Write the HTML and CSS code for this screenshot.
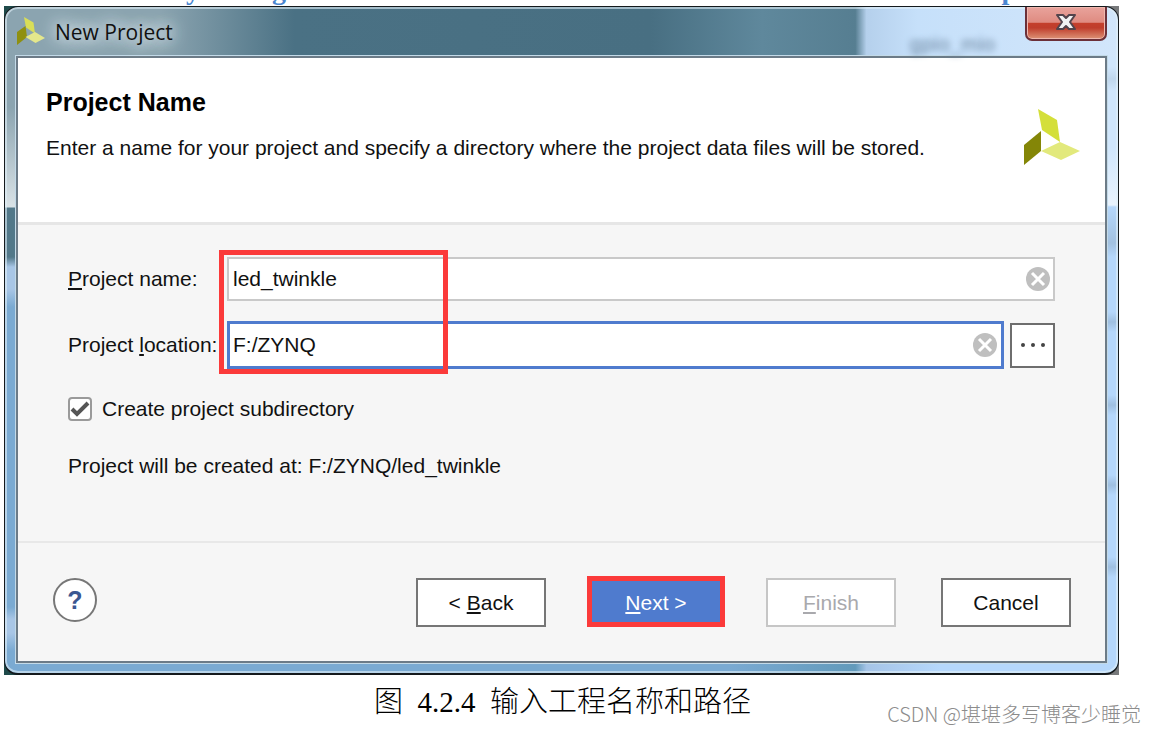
FILE: index.html
```
<!DOCTYPE html>
<html lang="zh-CN">

<head>
    <meta charset="UTF-8">
    <meta name="viewport" content="width=device-width, initial-scale=1.0">
    <title>New Project</title>
    <link rel="stylesheet" href="styles.css">
</head>

<body>
    <p class="previous-line"><span>y</span><span>g</span><span>p</span></p>

    <div class="backdrop">
        <div class="window">
            <header class="titlebar">
                <svg class="titlebar-logo" viewBox="0 0 56 56" aria-hidden="true">
                    <path fill="#d9de58" d="M14 0 33 11 36 33 18 21z" />
                    <path fill="#8f9010" d="M0 30 17 18 20 40 0 56z" />
                    <path fill="#e4e78c" d="M17 40 36 30 56 42 37 52z" />
                </svg>
                <span class="titlebar-text">New Project</span>
                <span class="ghost">gpio_mio</span>
                <button class="close" type="button" aria-label="Close">
                    <svg width="20" height="18" viewBox="0 0 20 18">
                        <path d="M1 2H7L10 5 13 2H19L14 9 19 16H13L10 13 7 16H1L6 9z" fill="#f2f2f2" stroke="#53444c" stroke-width="2" stroke-linejoin="round" />
                    </svg>
                </button>
            </header>

            <main class="panel">
                <section class="intro">
                    <div>
                        <h1>Project Name</h1>
                        <p>Enter a name for your project and specify a directory where the project data files will be stored.</p>
                    </div>
                    <svg class="intro-logo" viewBox="0 0 56 56" aria-hidden="true">
                        <path fill="#d4df3a" d="M14 0 33 11 36 33 18 21z" />
                        <path fill="#848607" d="M0 36 17 22 17 42 0 56z" />
                        <path fill="#e2e97c" d="M17 42 36 33 56 42 37 51z" />
                    </svg>
                </section>

                <form class="form" id="project-form">
                    <div class="row">
                        <label for="name"><u>P</u>roject name:</label>
                        <div class="field">
                            <input id="name" type="text" value="led_twinkle">
                            <button class="clear" type="button" aria-label="Clear name">
                                <svg width="26" height="26" viewBox="0 0 26 26">
                                    <circle cx="13" cy="13" r="12" fill="#bfbfbf" />
                                    <path d="M7 7 19 19M19 7 7 19" stroke="#fff" stroke-width="3" />
                                </svg>
                            </button>
                        </div>
                    </div>
                    <div class="row">
                        <label for="location">Project <u>l</u>ocation:</label>
                        <div class="field field-active">
                            <input id="location" type="text" value="F:/ZYNQ">
                            <button class="clear" type="button" aria-label="Clear location">
                                <svg width="26" height="26" viewBox="0 0 26 26">
                                    <circle cx="13" cy="13" r="12" fill="#bfbfbf" />
                                    <path d="M7 7 19 19M19 7 7 19" stroke="#fff" stroke-width="3" />
                                </svg>
                            </button>
                        </div>
                        <button class="browse" type="button" aria-label="Browse">
                            <svg width="26" height="6" viewBox="0 0 26 6" fill="#444">
                                <circle cx="3" cy="3" r="2" />
                                <circle cx="13" cy="3" r="2" />
                                <circle cx="23" cy="3" r="2" />
                            </svg>
                        </button>
                    </div>
                    <span class="highlight"></span>
                    <label class="check">
                        <input type="checkbox" checked>
                        Create project subdirectory
                    </label>
                    <p class="result">Project will be created at: F:/ZYNQ/led_twinkle</p>
                </form>

                <footer class="footer">
                    <button class="help" type="button">?</button>
                    <div class="actions">
                        <button class="btn" type="button">&lt; <u>B</u>ack</button>
                        <button class="btn btn-next" type="submit" form="project-form"><u>N</u>ext &gt;</button>
                        <button class="btn" type="button" disabled><u>F</u>inish</button>
                        <button class="btn" type="button">Cancel</button>
                    </div>
                </footer>
            </main>
        </div>
    </div>

    <p class="caption">图&nbsp; <span class="number">4.2.4</span>&nbsp; 输入工程名称和路径</p>
    <p class="watermark">CSDN @堪堪多写博客少睡觉</p>
</body>

</html>
```

FILE: styles.css
```
* {
    box-sizing: border-box;
}

body {
    margin: 0;
    background: #fff;
    color: #111;
    font-family: "Liberation Sans", Arial, sans-serif;
    font-size: 21px;
    line-height: 26px;
}

h1,
p {
    margin: 0;
}

button,
input {
    font: inherit;
    color: inherit;
}

u {
    text-decoration-thickness: 2px;
    text-underline-offset: 2px;
    text-decoration-skip-ink: none;
}

/* bottom edge of the text line above the figure */
.previous-line {
    display: flex;
    align-items: flex-end;
    gap: 72px;
    height: 6px;
    padding: 0 138px 0 186px;
    overflow: hidden;
    color: #4a86d0;
    font: bold 28px/32px "Liberation Serif", serif;
}

.previous-line span:last-child {
    margin-left: auto;
}

.backdrop {
    margin: 0 36px 0 4px;
    background: linear-gradient(90deg, #1f4a4a 50%, #77797b 50%);
}

.window {
    padding: 0 11px 10px;
    border: 1px solid #14191c;
    border-bottom-width: 2px;
    border-radius: 14px;
    box-shadow: inset 0 0 0 2px rgba(225, 240, 248, 0.6);
    background:
        linear-gradient(90deg, #8ba4b0 0, #8ba4b0 14%, #4a7184 26%, #486f82 58%, #5f889c 68%, #567e91 76.4%, #b5d0ec 77.4%, #c6e0fa 82%, #d2e6fb 100%) 0 0 / 100% 50px no-repeat,
        linear-gradient(#8ba4b0 100px, #d9e2e6 200px, #527889 201px, #527889 250px, #a8c6e6 260px, #a8c6e6 282px, #7aaad2 300px, #7aaad2 600px, #a8c6e6 612px, #a8c6e6 626px, #7aaad2 644px) 0 0 / 14px 100% no-repeat,
        linear-gradient(#d0e6fc 60px, #bfd6ec 72px, #d0e6fc 84px, #d0e6fc 140px, #e9f3fd 198px, #b5d7fb 200px, #a2c1e0 236px, #b5d7fb 250px, #b5d7fb 305px, #9fbfe0 315px, #b5d7fb 325px, #b5d7fb 388px, #9fbfe0 398px, #b5d7fb 408px, #b5d7fb 468px, #9fbfe0 478px, #b5d7fb 488px, #b5d7fb 550px, #9fbfe0 560px, #b5d7fb 570px) 100% 0 / 14px 100% no-repeat,
        linear-gradient(90deg, #7aaad2 65%, #629abb 76.4%, #a5c4e7 77.4%, #b5d7fb 84%) 0 100% / 100% 14px no-repeat;
}

.titlebar {
    display: flex;
    align-items: flex-start;
    height: 49px;
}

.titlebar-logo {
    width: 28px;
    height: 28px;
    margin: 10px 10px 0 1px;
}

.titlebar-text {
    margin-top: 12px;
    font-family: "Open Sans", "Noto Sans", sans-serif;
    text-shadow: 0 0 12px #d8e4ea, 0 0 16px #d8e4ea, 0 0 20px #d8e4ea;
}

.ghost {
    margin: 24px 30px 0 auto;
    color: transparent;
    text-shadow: 0 0 6px #6d87a0;
}

.close {
    display: flex;
    align-items: center;
    justify-content: center;
    width: 82px;
    height: 34px;
    padding: 0 0 2px;
    border: 2px solid #6b3039;
    border-top: 0;
    border-radius: 0 0 7px 7px;
    box-shadow: inset 0 0 0 1px #f0b7ae;
    background: linear-gradient(#e9a39c, #df8b81 48%, #c43f2c 50%, #bf3d2c 65%, #dd9376);
}

.panel {
    border: 2px solid #6c7b87;
    box-shadow: 0 0 0 1px #c3dae8;
    background: #f6f6f6;
}

.intro {
    display: flex;
    justify-content: space-between;
    align-items: flex-start;
    padding: 31px 25px 0 28px;
    min-height: 167px;
    border-bottom: 3px solid #e6e6e6;
    background: #fff;
}

.intro h1 {
    margin-bottom: 20px;
    font-size: 25px;
    line-height: 26px;
    color: #000;
}

.intro-logo {
    flex: none;
    width: 56px;
    height: 56px;
    margin-top: 20px;
}

.form {
    position: relative;
    min-height: 316px;
    padding: 29px 50px 0;
}

.row {
    display: flex;
    align-items: center;
    height: 50px;
    margin-bottom: 16px;
}

.row label {
    flex: none;
    width: 159px;
}

.field {
    display: flex;
    flex: 1;
    align-items: center;
    height: 44px;
    padding: 0 2px 0 4px;
    border: 2px solid #c9c9c9;
    background: #fff;
}

.field-active {
    height: 48px;
    padding: 0 3px;
    border: 3px solid #4f7bce;
}

.field input {
    flex: 1;
    min-width: 0;
    padding: 0;
    border: 0;
    outline: 0;
    background: none;
}

.clear {
    display: flex;
    padding: 0;
    border: 0;
    background: none;
}

.browse {
    display: flex;
    align-items: center;
    justify-content: center;
    width: 45px;
    height: 45px;
    margin-left: 6px;
    padding: 0;
    border: 2px solid #6e6e6e;
    background: #fff;
}

/* red frame over both text fields */
.highlight {
    position: absolute;
    top: 25px;
    left: 201px;
    width: 229px;
    height: 124px;
    border: 5px solid #fb3a3a;
    pointer-events: none;
}

.check {
    display: flex;
    align-items: center;
    gap: 10px;
    width: max-content;
    margin-top: 26px;
}

.check input {
    appearance: none;
    width: 24px;
    height: 24px;
    margin: 0;
    border: 2px solid #9a9a9a;
    border-radius: 4px;
    background: #fff;
}

.check input:checked {
    background: #fff url("data:image/svg+xml,%3Csvg xmlns='http://www.w3.org/2000/svg' viewBox='0 0 20 20'%3E%3Cpath d='M2 10 7 15 18 4' fill='none' stroke='%23555' stroke-width='4'/%3E%3C/svg%3E") center / 20px 20px no-repeat;
}

.result {
    margin-top: 31px;
}

.footer {
    display: flex;
    align-items: flex-start;
    justify-content: space-between;
    min-height: 120px;
    padding: 35px 34px 0 35px;
    border-top: 2px solid #e8e8e8;
}

.help {
    width: 44px;
    height: 44px;
    padding: 0;
    border: 2px solid #777;
    border-radius: 50%;
    background: #fff;
    color: #3a5791;
    font-size: 25px;
    font-weight: bold;
}

.actions {
    display: flex;
    gap: 45px;
}

.btn {
    position: relative;
    width: 130px;
    height: 49px;
    padding: 0;
    border: 2px solid #767676;
    background: #fff;
}

.btn:disabled {
    border-color: #c6c6c6;
    color: #a9a9ad;
}

.btn-next {
    border-color: #4f7bce;
    background: #4f7bce;
    color: #fff;
}

.btn-next::after {
    content: "";
    position: absolute;
    inset: -4px -6px -2px;
    border: 5px solid #fb3a3a;
}

.caption {
    padding: 8px 0 0 374px;
    color: #000;
    font: 300 29px/38px "Liberation Serif", "Noto Sans CJK SC", serif;
}

.number {
    font-weight: 400;
}

.watermark {
    margin-top: -20px;
    padding-right: 14px;
    color: #8c8c8c;
    font: 300 20px/26px "Noto Sans CJK SC", sans-serif;
    text-align: right;
}
```
